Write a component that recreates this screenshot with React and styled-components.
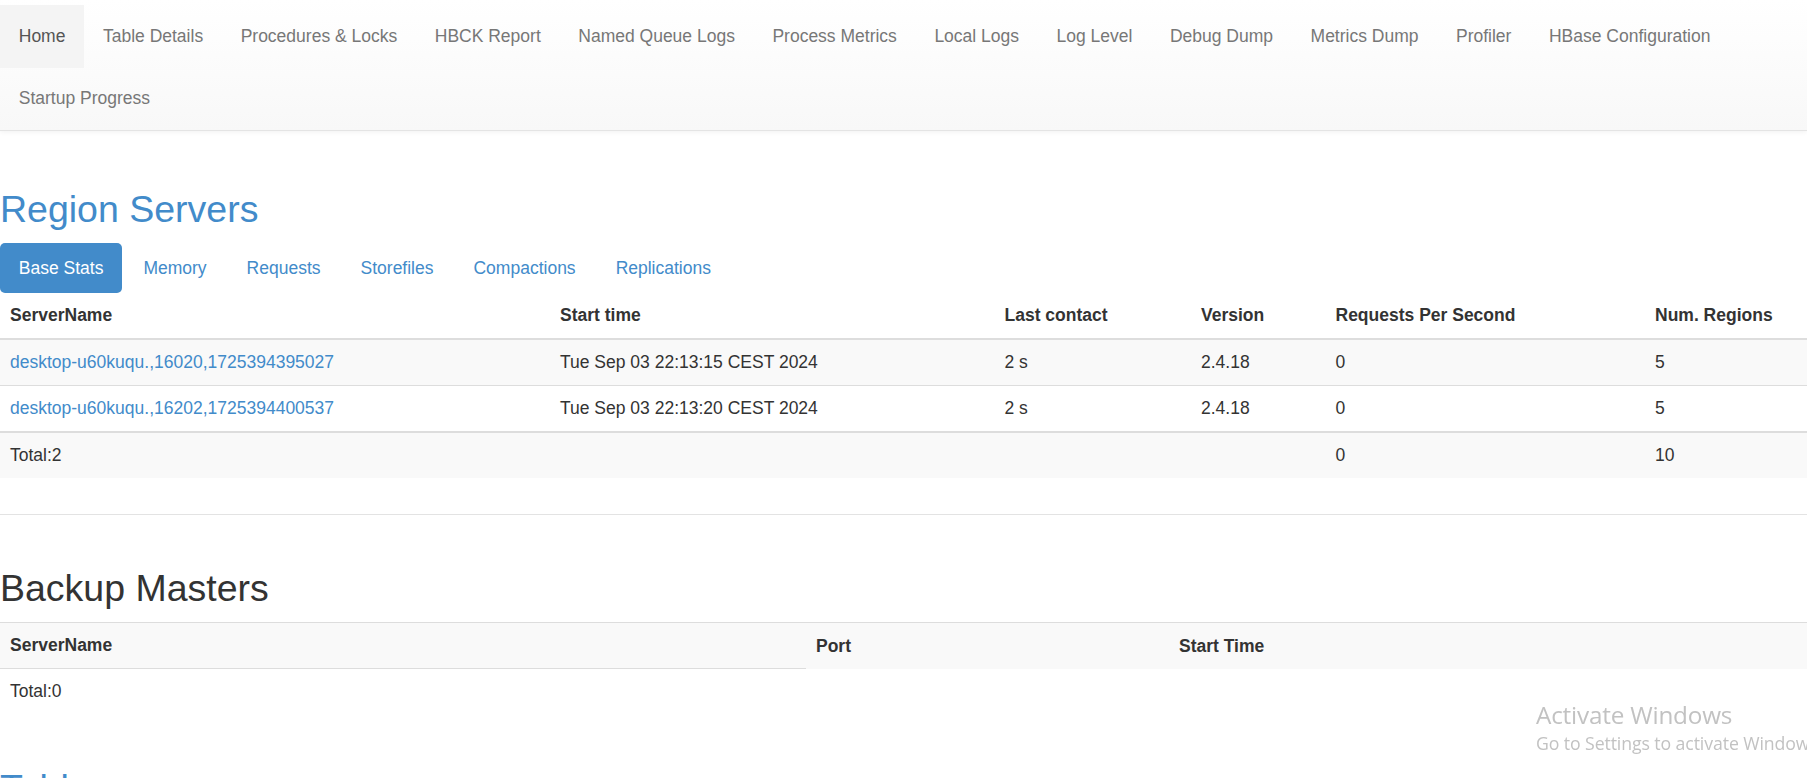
import React from "react";
import styled, { createGlobalStyle } from "styled-components";

const Global = createGlobalStyle`
  html, body { margin: 0; padding: 0; overflow: hidden; background: #fff; }
  body {
    font-family: "Liberation Sans", Arial, Helvetica, sans-serif;
    font-size: 17.5px;
    line-height: 25px;
    color: #333;
  }
  * { box-sizing: border-box; }
`;

const Navbar = styled.nav`
  background: linear-gradient(to bottom, #ffffff 0%, #f8f8f8 100%);
  border-bottom: 1.25px solid #e4e4e4;
  box-shadow: 0 1px 5px rgba(0, 0, 0, 0.06);
  padding-top: 5px;
`;

const NavList = styled.ul`
  list-style: none;
  margin: 0;
  padding: 0;
  display: flex;
  flex-wrap: wrap;
`;

const NavLink = styled.a`
  display: block;
  padding: 18.75px 18.75px;
  line-height: 25px;
  color: ${(p) => (p.$active ? "#555" : "#777")};
  background: ${(p) => (p.$active ? "#f4f4f4" : "transparent")};
  text-decoration: none;
  white-space: nowrap;
`;

const Main = styled.main`
  padding: 0;
`;

const Heading = styled.h2`
  font-size: 37.5px;
  line-height: 41.25px;
  font-weight: 500;
  margin: ${(p) => p.$top}px 0 12.7px 0;
  color: ${(p) => (p.$link ? "#428bca" : "#333")};
`;

const Pills = styled.ul`
  list-style: none;
  margin: 0;
  padding: 0;
  display: flex;
  gap: 2.5px;
`;

const Pill = styled.a`
  display: block;
  padding: 12.5px 18.75px;
  line-height: 25px;
  border-radius: 5px;
  text-decoration: none;
  color: ${(p) => (p.$active ? "#fff" : "#428bca")};
  background: ${(p) => (p.$active ? "#428bca" : "transparent")};
`;

const Table = styled.table`
  width: 100%;
  table-layout: fixed;
  border-collapse: collapse;
  border-spacing: 0;
  margin: 0;
`;

const Col = styled.col`
  width: ${(p) => (p.$w ? `${p.$w}px` : "auto")};
`;

const Th = styled.th`
  text-align: left;
  font-weight: bold;
  padding: 10px;
  line-height: 25px;
  vertical-align: bottom;
  white-space: nowrap;
  border-bottom: ${(p) => (p.$thead ? "2.5px solid #ddd" : "none")};
  border-top: ${(p) => (p.$boxed ? "1.25px solid #ddd" : "none")};
`;

const Row = styled.tr`
  background: ${(p) => (p.$striped ? "#f9f9f9" : "transparent")};
`;

const Td = styled.td`
  padding: 10px;
  line-height: 25px;
  white-space: nowrap;
  border-top: ${(p) => (p.$thick ? "2.5px" : "1.25px")} solid #ddd;
`;

const Link = styled.a`
  color: #428bca;
  text-decoration: none;
`;

const Rule = styled.hr`
  border: 0;
  border-top: 1.25px solid #e3e3e3;
  margin: 36px 0 0 0;
`;

const Watermark = styled.div`
  position: fixed;
  left: 1536px;
  top: 698px;
  font-family: "Open Sans", "Noto Sans", sans-serif;
  color: #c2c2c2;
  white-space: nowrap;
  pointer-events: none;
`;

const WmTitle = styled.div`
  font-size: 24.3px;
  line-height: 33px;
  letter-spacing: -0.2px;
`;

const WmSub = styled.div`
  font-size: 17.7px;
  line-height: 24px;
  letter-spacing: -0.1px;
`;

const navItems = [
  "Home",
  "Table Details",
  "Procedures & Locks",
  "HBCK Report",
  "Named Queue Logs",
  "Process Metrics",
  "Local Logs",
  "Log Level",
  "Debug Dump",
  "Metrics Dump",
  "Profiler",
  "HBase Configuration",
  "Startup Progress",
];

const tabs = ["Base Stats", "Memory", "Requests", "Storefiles", "Compactions", "Replications"];

const servers = [
  ["desktop-u60kuqu.,16020,1725394395027", "Tue Sep 03 22:13:15 CEST 2024", "2 s", "2.4.18", "0", "5"],
  ["desktop-u60kuqu.,16202,1725394400537", "Tue Sep 03 22:13:20 CEST 2024", "2 s", "2.4.18", "0", "5"],
];

export default function App() {
  return (
    <>
      <Global />
      <Navbar>
        <NavList>
          {navItems.map((n, i) => (
            <li key={n}>
              <NavLink href="#" $active={i === 0}>{n}</NavLink>
            </li>
          ))}
        </NavList>
      </Navbar>
      <Main>
        <section>
          <Heading $top={58.25} $link>Region Servers</Heading>
          <Pills>
            {tabs.map((t, i) => (
              <li key={t}>
                <Pill href="#" $active={i === 0}>{t}</Pill>
              </li>
            ))}
          </Pills>
          <Table>
            <colgroup>
              <Col $w={550} />
              <Col $w={444.5} />
              <Col $w={196.5} />
              <Col $w={134.5} />
              <Col $w={319.5} />
              <Col />
            </colgroup>
            <thead>
              <tr>
                <Th $thead>ServerName</Th>
                <Th $thead>Start time</Th>
                <Th $thead>Last contact</Th>
                <Th $thead>Version</Th>
                <Th $thead>Requests Per Second</Th>
                <Th $thead>Num. Regions</Th>
              </tr>
            </thead>
            <tbody>
              {servers.map((s, i) => (
                <Row key={s[0]} $striped={i % 2 === 0}>
                  <Td><Link href="#">{s[0]}</Link></Td>
                  <Td>{s[1]}</Td>
                  <Td>{s[2]}</Td>
                  <Td>{s[3]}</Td>
                  <Td>{s[4]}</Td>
                  <Td>{s[5]}</Td>
                </Row>
              ))}
            </tbody>
            <tbody>
              <Row $striped>
                <Td $thick>Total:2</Td>
                <Td $thick></Td>
                <Td $thick></Td>
                <Td $thick></Td>
                <Td $thick>0</Td>
                <Td $thick>10</Td>
              </Row>
            </tbody>
          </Table>
          <Rule />
        </section>
        <section>
          <Heading $top={53}>Backup Masters</Heading>
          <Table>
            <colgroup>
              <Col $w={806} />
              <Col $w={363} />
              <Col />
            </colgroup>
            <tbody>
              <Row $striped>
                <Th $boxed>ServerName</Th>
                <Th $boxed>Port</Th>
                <Th $boxed>Start Time</Th>
              </Row>
              <Row>
                <Td>Total:0</Td>
              </Row>
            </tbody>
          </Table>
        </section>
        <section>
          <Heading $top={54} $link>Tables</Heading>
        </section>
      </Main>
      <Watermark>
        <WmTitle>Activate Windows</WmTitle>
        <WmSub>Go to Settings to activate Windows.</WmSub>
      </Watermark>
    </>
  );
}
